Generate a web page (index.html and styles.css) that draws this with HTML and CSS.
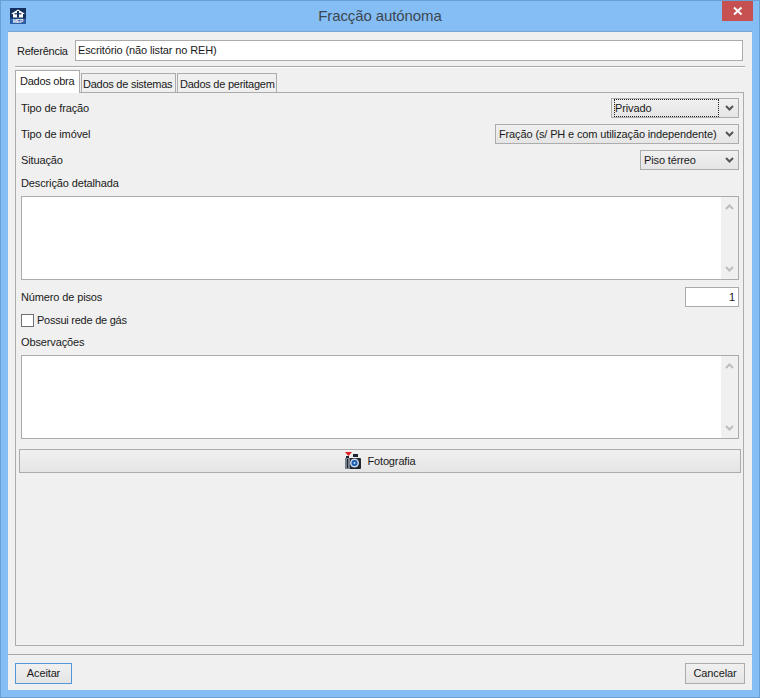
FILE: index.html
```html
<!DOCTYPE html>
<html lang="pt">
<head>
<meta charset="utf-8">
<title>Fracção autónoma</title>
<link rel="stylesheet" href="styles.css">
</head>
<body>
<div class="window">
  <header class="titlebar">
    <svg class="appicon" width="16" height="16" viewBox="0 0 16 16">
      <rect width="16" height="16" fill="#14305f"/>
      <path d="M8 1.5 14.5 5.5V6H13V9.5H3V6H1.5V5.5Z" fill="#fff"/>
      <rect x="7" y="3" width="2" height="6.5" fill="#14305f"/>
      <rect x="4.5" y="5.2" width="7" height="1.2" fill="#14305f"/>
      <rect x="0" y="10.5" width="16" height="5.5" fill="#2c5ca6"/>
      <text x="8" y="15.2" class="icontext">MEP</text>
    </svg>
    <div class="title">Fracção autónoma</div>
    <div class="close">
      <svg width="10" height="10" viewBox="0 0 10 10"><path d="M1 1.5 8.5 8.5M8.5 1.5 1 8.5" stroke="#fff" stroke-width="2" fill="none"/></svg>
    </div>
  </header>
  <div class="client">
    <div class="main">
      <div class="refrow">
        <span class="reflabel">Referência</span>
        <div class="input grow">Escritório (não listar no REH)</div>
      </div>
      <div class="rule"></div>
      <div class="tabs">
        <div class="tab active">Dados obra</div>
        <div class="tab tab-sys">Dados de sistemas</div>
        <div class="tab tab-per">Dados de peritagem</div>
      </div>
      <div class="panel">
        <div class="row">
          <span>Tipo de fração</span>
          <div class="select w-privado"><span class="focus">Privado</span><svg class="chev" width="9" height="6" viewBox="0 0 9 6"><path d="M1 1 4.5 4.5 8 1" stroke="#555" stroke-width="2" fill="none"/></svg></div>
        </div>
        <div class="row">
          <span>Tipo de imóvel</span>
          <div class="select w-tipo"><span>Fração (s/ PH e com utilização independente)</span><svg class="chev" width="9" height="6" viewBox="0 0 9 6"><path d="M1 1 4.5 4.5 8 1" stroke="#555" stroke-width="2" fill="none"/></svg></div>
        </div>
        <div class="row">
          <span>Situação</span>
          <div class="select w-piso"><span>Piso térreo</span><svg class="chev" width="9" height="6" viewBox="0 0 9 6"><path d="M1 1 4.5 4.5 8 1" stroke="#555" stroke-width="2" fill="none"/></svg></div>
        </div>
        <div class="caption cap-desc">Descrição detalhada</div>
        <div class="textarea">
          <div class="scrollbar">
            <svg width="9" height="6" viewBox="0 0 9 6"><path d="M1 5 4.5 1.5 8 5" stroke="#bdbdbd" stroke-width="2" fill="none"/></svg>
            <svg width="9" height="6" viewBox="0 0 9 6"><path d="M1 1 4.5 4.5 8 1" stroke="#bdbdbd" stroke-width="2" fill="none"/></svg>
          </div>
        </div>
        <div class="row numrow">
          <span>Número de pisos</span>
          <div class="input number">1</div>
        </div>
        <div class="check">
          <span class="box"></span>
          <span class="check-label">Possui rede de gás</span>
        </div>
        <div class="caption cap-obs">Observações</div>
        <div class="textarea">
          <div class="scrollbar">
            <svg width="9" height="6" viewBox="0 0 9 6"><path d="M1 5 4.5 1.5 8 5" stroke="#bdbdbd" stroke-width="2" fill="none"/></svg>
            <svg width="9" height="6" viewBox="0 0 9 6"><path d="M1 1 4.5 4.5 8 1" stroke="#bdbdbd" stroke-width="2" fill="none"/></svg>
          </div>
        </div>
        <div class="photo">
          <svg width="18" height="18" viewBox="0 0 18 18">
            <path d="M1 0H8L4.5 4Z" fill="#e01b24"/>
            <rect x="9" y="2" width="5" height="3" fill="#1b2430"/>
            <rect x="2" y="4" width="3" height="2" fill="#1b2430"/>
            <rect x="1" y="6" width="16" height="11" rx="1" fill="#20262e"/>
            <rect x="1" y="6" width="5" height="11" fill="#77808c"/>
            <rect x="3" y="7" width="1" height="9" fill="#20262e"/>
            <circle cx="10.5" cy="11" r="4.5" fill="#c9d6e6"/>
            <circle cx="10.5" cy="11" r="3" fill="#1c5fb0"/>
            <circle cx="10.5" cy="11" r="1" fill="#bfe0ff"/>
          </svg>
          <span>Fotografia</span>
        </div>
      </div>
    </div>
    <footer class="footer">
      <div class="btn default">Aceitar</div>
      <div class="btn cancel">Cancelar</div>
    </footer>
  </div>
</div>
</body>
</html>
```
FILE: styles.css
```css
* { box-sizing: border-box; }
html, body { margin: 0; padding: 0; }
body {
  width: 760px;
  height: 698px;
  overflow: hidden;
  font-family: "Liberation Sans", Arial, sans-serif;
  font-size: 11px;
  letter-spacing: -0.13px;
  color: #1a1a1a;
}
.window {
  width: 760px;
  height: 698px;
  background: #85bef5;
  border: 1px solid #6a9fd4;
  padding: 0 7px 7px;
  display: flex;
  flex-direction: column;
}
.titlebar {
  height: 30px;
  flex: none;
  display: flex;
  align-items: flex-start;
  position: relative;
}
.appicon { margin: 7px 0 0 2px; }
.icontext { font-size: 5px; font-weight: 700; fill: #fff; text-anchor: middle; font-family: "Liberation Sans", sans-serif; }
.title {
  position: absolute;
  left: 0;
  right: 0;
  top: 5px;
  text-align: center;
  font-size: 15px;
  letter-spacing: -0.1px;
  line-height: 20px;
  color: #3c4650;
}
.close {
  position: absolute;
  right: -1px;
  top: 0;
  width: 31px;
  height: 20px;
  background: #c75050;
  display: flex;
  align-items: center;
  justify-content: center;
}
.client {
  flex: 1;
  display: flex;
  flex-direction: column;
  background: #f0f0f0;
  border: 1px solid #7aa5cf;
  border-width: 1px 0 0 0;
}
.main { flex: 1; padding: 8px 7px 0; }
.refrow { display: flex; align-items: center; height: 21px; margin-right: 2px; padding-left: 2px; }
.reflabel { width: 58px; flex: none; letter-spacing: -0.25px; }
.grow { flex: 1; height: 21px; }
.input {
  background: #fff;
  border: 1px solid #ababab;
  padding: 0 2px;
  line-height: 19px;
}
.rule { height: 2px; margin-top: 5px; background: #a9a9a9; border-bottom: 1px solid #fff; }
.tabs { display: flex; align-items: flex-end; height: 25px; position: relative; z-index: 1; letter-spacing: -0.25px; }
.tab {
  height: 20px;
  line-height: 20px;
  padding: 0 1px;
  background: #efefef;
  border: 1px solid #acacac;
  margin-left: 1px;
  white-space: nowrap;
}
.tab.active {
  height: 23px;
  line-height: 21px;
  padding: 0 4px;
  width: 65px;
  margin-left: 0;
  background: #fff;
  border-bottom: 0;
}
.tab-sys { width: 95px; }
.tab-per { width: 100px; padding-left: 2px; }
.panel {
  width: 729px;
  height: 554px;
  margin-top: -1px;
  border: 1px solid #acacac;
  padding: 5px 4px 0 5px;
  background: #f0f0f0;
}
.row { display: flex; justify-content: space-between; align-items: center; height: 20px; margin-bottom: 6px; }
.select {
  height: 20px;
  border: 1px solid #acacac;
  background: linear-gradient(#f0f0f0, #e5e5e5);
  display: flex;
  align-items: center;
  justify-content: space-between;
  padding: 0 3px;
  white-space: nowrap;
}
.w-privado { width: 128px; }
.w-tipo { width: 244px; }
.w-piso { width: 99px; }
.focus { outline: 1px dotted #222; flex: 1; margin-right: 1px; line-height: 16px; }
.chev { flex: none; margin: 0 1px 0 6px; }
.caption { height: 16px; line-height: 16px; }
.cap-desc { margin-top: -1px; margin-bottom: 5px; }
.cap-obs { margin-top: 7px; margin-bottom: 5px; }
.textarea {
  height: 84px;
  background: #fff;
  border: 1px solid #ababab;
  display: flex;
  justify-content: flex-end;
}
.scrollbar {
  width: 17px;
  background: #f0f0f0;
  display: flex;
  flex-direction: column;
  justify-content: space-between;
  align-items: center;
  padding: 7px 0;
}
.numrow { margin-top: 7px; margin-bottom: 7px; height: 20px; }
.number { width: 54px; height: 20px; text-align: right; padding-right: 3px; }
.check { display: flex; align-items: center; height: 13px; gap: 3px; }
.check-label { padding-bottom: 2px; letter-spacing: -0.25px; }
.box { width: 13px; height: 13px; background: #fff; border: 1px solid #707070; }
.photo {
  height: 24px;
  margin: 10px -2px 0 -2px;
  border: 1px solid #acacac;
  background: linear-gradient(#f0f0f0, #e5e5e5);
  display: flex;
  align-items: center;
  justify-content: center;
  gap: 5px;
}
.footer {
  height: 36px;
  flex: none;
  display: flex;
  justify-content: space-between;
  align-items: flex-start;
  padding: 8px 7px 0;
  margin-top: 7px;
  border-top: 1px solid #a9a9a9;
  background: #f0f0f0;
}
.btn {
  height: 21px;
  border: 1px solid #acacac;
  background: linear-gradient(#f0f0f0, #e5e5e5);
  text-align: center;
  line-height: 19px;
}
.btn.default { width: 57px; border-color: #4f97d6; }
.btn.cancel { width: 60px; }
```
